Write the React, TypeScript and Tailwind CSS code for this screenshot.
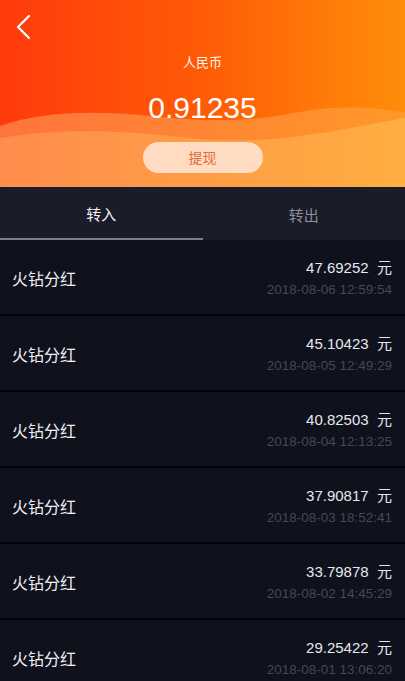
const ROWS = [
  { amount: "47.69252", time: "2018-08-06 12:59:54" },
  { amount: "45.10423", time: "2018-08-05 12:49:29" },
  { amount: "40.82503", time: "2018-08-04 12:13:25" },
  { amount: "37.90817", time: "2018-08-03 18:52:41" },
  { amount: "33.79878", time: "2018-08-02 14:45:29" },
  { amount: "29.25422", time: "2018-08-01 13:06:20" },
];

const font = { fontFamily: '"Noto Sans CJK SC", "Liberation Sans", sans-serif' };
const latin = { fontFamily: '"Liberation Sans", "Noto Sans CJK SC", sans-serif' };

export default function App() {
  return (
    <div className="h-[681px] w-[405px] overflow-hidden bg-[#0f111c]" style={font}>
      <Header />
      <div className="flex h-[53px] bg-[#1b1c2a]">
        <div className="flex flex-1 items-center justify-center border-b-2 border-[#7a7d8b] pt-1 text-[15px] text-[#eef0f4]">转入</div>
        <div className="flex flex-1 items-center justify-center pt-1 text-[15px] text-[#8c8e9a]">转出</div>
      </div>
      <div>
        {ROWS.map((r) => (
          <div key={r.time} className="flex h-[76px] items-center justify-between border-b-2 border-[#05060b] px-3 pt-px">
            <span className="text-[16px] text-[#eef0f4]">火钻分红</span>
            <div className="flex flex-col items-end pr-[1px]">
              <span className="text-[15px] leading-6 text-[#e6e8ee]" style={latin}>
                {r.amount}&nbsp;&nbsp;<span style={font}>元</span>
              </span>
              <span className="text-[13.5px] leading-5 text-[#454857]" style={latin}>{r.time}</span>
            </div>
          </div>
        ))}
      </div>
    </div>
  );
}

function Header() {
  return (
    <div className="relative h-[187px] overflow-hidden bg-gradient-to-r from-[#ff3a0c] via-[#ff5a06] to-[#ff8d0a]">
      <svg className="absolute inset-0 h-full w-full" viewBox="0 0 405 187" preserveAspectRatio="none">
        <defs>
          <linearGradient id="w1" x1="0" x2="1" y1="0" y2="0">
            <stop offset="0" stopColor="#ff7a44" />
            <stop offset="1" stopColor="#ff9a2c" />
          </linearGradient>
          <linearGradient id="w2" x1="0" x2="1" y1="0" y2="0">
            <stop offset="0" stopColor="#ff8c4c" />
            <stop offset="1" stopColor="#ffae40" />
          </linearGradient>
        </defs>
        <path d="M0 126 C 40 112, 90 110, 150 116 C 210 122, 250 122, 300 112 C 340 104, 380 108, 405 112 L405 187 L0 187 Z" fill="url(#w1)" opacity="0.9" />
        <path d="M0 138 C 60 128, 120 130, 190 138 C 260 146, 320 134, 405 118 L405 187 L0 187 Z" fill="url(#w2)" />
      </svg>
      <svg className="absolute left-[14px] top-[14px]" width="18" height="26" viewBox="0 0 18 26" fill="none">
        <path d="M15 2 L4 13 L15 24" stroke="white" strokeWidth="2.2" strokeLinecap="round" strokeLinejoin="round" />
      </svg>
      <div className="relative flex h-full flex-col items-center">
        <div className="mt-[52px] text-[13px] text-[#fff4ec]">人民币</div>
        <div className="mt-[18px] text-[30px] leading-9 text-white" style={latin}>0.91235</div>
        <div className="mt-[16px] flex h-[31px] w-[120px] items-center justify-center rounded-full bg-[#ffe3cf]/90 text-[14px] text-[#e6683c]">提现</div>
      </div>
    </div>
  );
}
